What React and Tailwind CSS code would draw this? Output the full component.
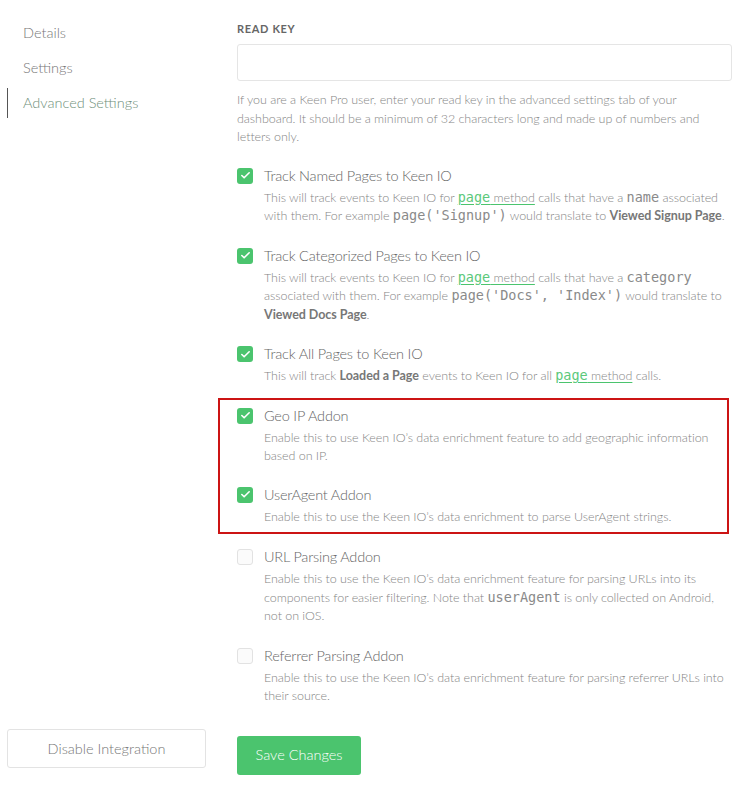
import { Check } from 'lucide-react';

const font = { fontFamily: 'Lato, "Open Sans", sans-serif' };

function Code({ children }) {
  return <code className="font-['DejaVu_Sans_Mono',monospace] text-[13.5px] leading-none tracking-normal text-[#8a8a8a]">{children}</code>;
}

function PageLink() {
  return (
    <a className="text-[#888] underline decoration-[#4bc46e] underline-offset-2">
      <code className="font-['DejaVu_Sans_Mono',monospace] text-[13.5px] leading-none tracking-normal text-[#5cc97b]">page</code> method
    </a>
  );
}

function Box({ checked }) {
  if (!checked) {
    return <span className="mt-[1px] h-4 w-4 shrink-0 rounded-[3px] border border-[#e2e2e2] bg-[#fbfbfb]" />;
  }
  return (
    <span className="mt-[1px] flex h-4 w-4 shrink-0 items-center justify-center rounded-[3px] bg-[#4bc46e]">
      <Check size={11} strokeWidth={3.5} className="text-white" />
    </span>
  );
}

function Option({ checked, title, children }) {
  return (
    <div className="flex gap-[11px]">
      <Box checked={checked} />
      <div className="min-w-0">
        <div className="text-[14.5px] font-light leading-[18px] tracking-[-0.2px] text-[#666]">{title}</div>
        <p className="mt-[4px] text-[12.5px] font-light leading-[18.5px] tracking-[-0.05px] text-[#858585]">{children}</p>
      </div>
    </div>
  );
}

export default function App() {
  return (
    <div className="flex h-[786px] w-[750px] bg-white" style={font}>
      <aside className="flex w-[206px] shrink-0 flex-col justify-between pb-[18px] pl-[7px] pt-[18px]">
        <nav className="flex flex-col gap-[5px]">
          <a className="pl-4 text-[14.5px] font-light leading-[30px] text-[#777]">Details</a>
          <a className="pl-4 text-[14.5px] font-light leading-[30px] text-[#777]">Settings</a>
          <a className="border-l border-[#555] pl-[15px] text-[14.5px] font-light leading-[30px] text-[#6f8f7a]">Advanced Settings</a>
        </nav>
        <button className="h-[39px] w-[199px] rounded-[3px] border border-[#e3e3e3] bg-white text-[14.5px] font-light text-[#777]">
          Disable Integration
        </button>
      </aside>

      <main className="ml-[31px] w-[495px] pt-[21px]">
        <label className="block text-[11px] font-bold uppercase leading-4 tracking-[0.06em] text-[#666]">Read Key</label>
        <input className="mt-[7px] block h-[37px] w-full rounded-[3px] border border-[#e5e5e5] px-3 outline-none" />
        <p className="mt-[10px] text-[12.5px] font-light leading-[18.5px] tracking-[-0.05px] text-[#858585]">
          If you are a Keen Pro user, enter your read key in the advanced settings tab of your dashboard. It should be a minimum of 32 characters long and made up of numbers and letters only.
        </p>

        <div className="mt-[20px] flex flex-col gap-[21px]">
          <Option checked title="Track Named Pages to Keen IO">
            This will track events to Keen IO for <PageLink /> calls that have a <Code>name</Code> associated with them. For example <Code>page('Signup')</Code> would translate to <b className="font-bold text-[#777]">Viewed Signup Page</b>.
          </Option>
          <Option checked title="Track Categorized Pages to Keen IO">
            This will track events to Keen IO for <PageLink /> calls that have a <Code>category</Code> associated with them. For example <Code>page('Docs', 'Index')</Code> would translate to <b className="font-bold text-[#777]">Viewed Docs Page</b>.
          </Option>
          <Option checked title="Track All Pages to Keen IO">
            This will track <b className="font-bold text-[#777]">Loaded a Page</b> events to Keen IO for all <PageLink /> calls.
          </Option>

          <div className="-mb-[7px] -ml-[19px] -mt-[9px] mr-[3px] flex flex-col gap-[20px] border-2 border-[#cc1414] pb-[6px] pl-[17px] pr-3 pt-[7px]">
            <Option checked title="Geo IP Addon">
              Enable this to use Keen IO’s data enrichment feature to add geographic information based on IP.
            </Option>
            <Option checked title="UserAgent Addon">
              Enable this to use the Keen IO’s data enrichment to parse UserAgent strings.
            </Option>
          </div>

          <Option title="URL Parsing Addon">
            Enable this to use the Keen IO’s data enrichment feature for parsing URLs into its components for easier filtering. Note that <Code>userAgent</Code> is only collected on Android, not on iOS.
          </Option>
          <Option title="Referrer Parsing Addon">
            Enable this to use the Keen IO’s data enrichment feature for parsing referrer URLs into their source.
          </Option>
        </div>

        <button className="mt-[30px] h-[39px] w-[124px] rounded-[3px] bg-[#4bc46e] text-[14.5px] font-light text-white">
          Save Changes
        </button>
      </main>
    </div>
  );
}
